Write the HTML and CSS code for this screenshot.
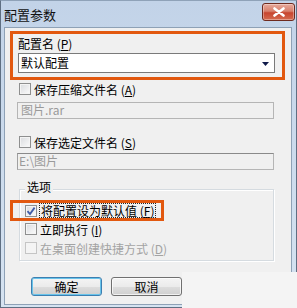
FILE: index.html
```html
<!DOCTYPE html>
<html lang="zh-CN">
<head>
<meta charset="utf-8">
<title>配置参数</title>
<link rel="stylesheet" href="styles.css">
</head>
<body>
<div class="window">
  <div class="titlebar">
    <span class="title">配置参数</span>
    <div class="close">
      <svg width="14" height="10" viewBox="0 0 14 10"><path d="M2.5 1.5 L11.5 8.5 M11.5 1.5 L2.5 8.5" stroke="#fff" stroke-width="2.6" stroke-linecap="round"/></svg>
    </div>
  </div>
  <div class="client">
    <div class="hl hl-name">
      <div class="label">配置名 (<u>P</u>)</div>
      <div class="combo">
        <span>默认配置</span>
        <svg class="arrow" width="7" height="4" viewBox="0 0 7 4"><path d="M0 0 H7 L3.5 4 Z" fill="#0f1a4a"/></svg>
      </div>
    </div>
    <div class="check-row r1"><span class="cb"></span><span>保存压缩文件名 (<u>A</u>)</span></div>
    <div class="field f1">图片.rar</div>
    <div class="check-row r2"><span class="cb"></span><span>保存选定文件名 (<u>S</u>)</span></div>
    <div class="field f2">E:\图片</div>
    <div class="group">
      <span class="legend">选项</span>
      <div class="hl hl-default">
        <span class="cb checked"><svg width="10" height="10" viewBox="0 0 10 10"><path d="M1.5 5.2 L4 8 L8.6 1.6" fill="none" stroke="#3f5ca8" stroke-width="1.8"/></svg></span>
        <span class="focus">将配置设为默认值 (<u>F</u>)</span>
      </div>
      <div class="check-row g2"><span class="cb"></span><span>立即执行 (<u>I</u>)</span></div>
      <div class="check-row g3 disabled"><span class="cb"></span><span>在桌面创建快捷方式 (<u>D</u>)</span></div>
    </div>
    <div class="buttons">
      <button class="btn default">确定</button>
      <button class="btn">取消</button>
    </div>
  </div>
  <div class="patch"></div>
</div>
</body>
</html>
```

FILE: styles.css
```css
* { box-sizing: border-box; }
html, body { margin: 0; padding: 0; }
body {
  width: 297px;
  height: 308px;
  overflow: hidden;
  background: #fff;
  font-family: "Noto Sans CJK SC", "DejaVu Sans", sans-serif;
  font-size: 12px;
  color: #000;
}
.window {
  position: relative;
  width: 297px;
  height: 308px;
  background: linear-gradient(#c2d3e8, #d6e3f1);
  border: 1px solid #5f6f82;
  border-top-color: #8fa2b8;
  display: flex;
  flex-direction: column;
  padding: 0 4px 2px 3px;
}
.titlebar {
  height: 26px;
  display: flex;
  align-items: flex-start;
  justify-content: space-between;
}
.title {
  font-size: 13px;
  line-height: 16px;
  margin: 6px 0 0 0;
  color: #111;
}
.close {
  margin: 2px -3px 0 0;
  width: 33px;
  height: 18px;
  border: 1px solid #6e2a1e;
  border-radius: 3px;
  background: linear-gradient(#e7aa9c 0%, #d8806c 45%, #c7452f 55%, #d56b4f 100%);
  display: flex;
  align-items: center;
  justify-content: center;
  box-shadow: inset 0 0 0 1px rgba(255,255,255,0.35);
}
.client {
  flex: 1;
  background: #f0f0f0;
  border: 1px solid #8ea1b6;
  display: flex;
  flex-direction: column;
  align-items: flex-start;
}
.hl {
  border: 3px solid #e2580f;
}
.hl-name {
  margin: 3px 0 0 5px;
  width: 275px;
  height: 49px;
  padding: 2px 0 0 5px;
}
.label {
  height: 17px;
  line-height: 15px;
}
.combo {
  width: 257px;
  height: 20px;
  border: 1px solid #7a7a7a;
  background: #fff;
  display: flex;
  align-items: center;
  justify-content: space-between;
  padding: 0 5px 0 2px;
  line-height: 16px;
}
.arrow { margin-top: 1px; }
.check-row {
  display: flex;
  align-items: center;
  height: 16px;
  gap: 3px;
}
.r1 { margin: 1px 0 0 14px; }
.r2 { margin: 15px 0 0 14px; }
.cb {
  width: 12px;
  height: 12px;
  flex: none;
  border: 1px solid #8e8f8f;
  background: linear-gradient(135deg, #d9dbde, #fbfbfb);
  box-shadow: inset 0 0 0 1px #f4f4f4;
  display: flex;
  align-items: center;
  justify-content: center;
}
.field {
  margin: 5px 0 0 12px;
  width: 257px;
  height: 17px;
  border: 1px solid #b5b5b5;
  background: #f0f0f0;
  color: #9a9a9a;
  line-height: 14px;
  padding-left: 3px;
}
.f2 {
  margin-top: 3px;
  border-top-color: #8a8a8a;
  border-left-color: #a0a0a0;
  padding-left: 1px;
}
.group {
  margin: 19px 0 0 14px;
  width: 255px;
  height: 72px;
  border: 1px solid #d5dbe0;
  box-shadow: 1px 1px 0 #fff, inset 1px 1px 0 #fff;
  display: flex;
  flex-direction: column;
  align-items: flex-start;
}
.legend {
  margin: -11px 0 0 5px;
  padding: 0 2px;
  background: #f0f0f0;
  line-height: 16px;
}
.hl-default {
  margin: 5px 0 0 -10px;
  width: 154px;
  height: 21px;
  display: flex;
  align-items: center;
  padding-left: 12px;
  gap: 3px;
}
.focus {
  outline: 1px dotted #222;
  line-height: 13px;
  padding: 0 1px;
}
.g2 { margin: 0 0 0 5px; }
.g3 { margin: 3px 0 0 5px; }
.disabled { color: #a3a3a3; }
.disabled .cb {
  border-color: #c5c5c5;
  background: #f4f4f4;
}
.buttons {
  margin: 16px 0 0 26px;
  display: flex;
  gap: 9px;
}
.btn {
  width: 71px;
  height: 19px;
  font: inherit;
  color: #000;
  line-height: 15px;
  padding: 0;
  border: 1px solid #707070;
  border-radius: 3px;
  background: linear-gradient(#f4f4f4 0%, #ebebeb 50%, #dddddd 51%, #cfcfcf 100%);
  box-shadow: inset 0 0 0 1px rgba(255,255,255,0.7);
}
.btn.default {
  border-color: #3c7fb1;
  box-shadow: inset 0 0 0 1px #68c3ea;
}
.patch {
  position: absolute;
  left: 181px;
  top: 271px;
  width: 116px;
  height: 37px;
  background: #f4f4f4;
}
```
